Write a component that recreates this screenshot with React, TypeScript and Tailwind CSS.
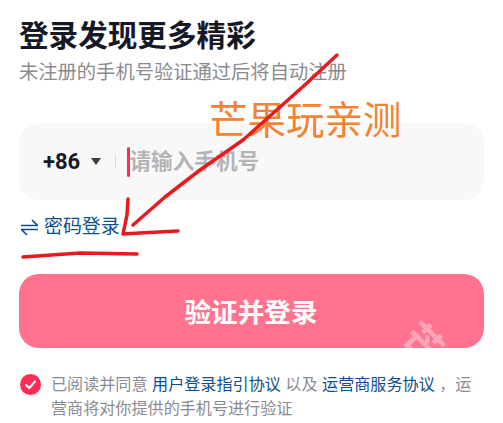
export default function App() {
  return (
    <div className="relative w-[503px] h-[423px] overflow-hidden bg-white px-[19px] pt-[15px] font-['Inter','Noto_Sans_CJK_SC',sans-serif]">
      <h1 className="text-[29.6px] leading-[40px] font-bold text-[#161823]">登录发现更多精彩</h1>
      <p className="mt-[3px] text-[19.3px] leading-[28px] text-[#8a8b91]">未注册的手机号验证通过后将自动注册</p>

      <div className="mt-[37px] flex h-[77px] items-center rounded-[20px] bg-[#f8f8f8] pl-[24px]">
        <span className="w-[37px] font-['Roboto',sans-serif] text-[22px] font-bold text-[#161823]">+86</span>
        <span className="ml-[11px] h-0 w-0 border-x-[5px] border-t-[7px] border-x-transparent border-t-[#3a3a42]" />
        <span className="ml-[14px] h-[15px] w-px bg-[#dddddf]" />
        <span className="ml-[11px] h-[30px] w-[2.5px] rounded-full bg-[#fe2c55]" />
        <span className="text-[21.6px] font-bold text-[#b4b4b6]">请输入手机号</span>
      </div>

      <div className="mt-[15px] flex h-[24px] items-center gap-[6px] pl-[2px] text-[18.9px] text-[#0f4f8d]">
        <svg width="17" height="17" viewBox="0 0 17 17" fill="none" stroke="currentColor" strokeWidth="1.6">
          <path d="M0 6.5H16.5L11 1" />
          <path d="M17 10.5H0.5L6 16" />
        </svg>
        <span>密码登录</span>
      </div>

      <button className="relative mt-[35px] flex h-[74px] w-full items-center justify-center overflow-hidden rounded-[20px] bg-[#ff738f] pt-[3px] text-[26.6px] font-bold text-white">
        <span className="-ml-[1px]">验证并登录</span>
        <span className="absolute left-[385px] top-[50px] rotate-45 text-[38px] leading-none font-bold text-white/40">芒</span>
      </button>

      <div className="mt-[24px] flex items-start gap-[10px] pl-px text-[16.1px] leading-[24px] text-[#8a8b91]">
        <svg className="mt-[2px] shrink-0" width="21" height="21" viewBox="0 0 21 21">
          <circle cx="10.5" cy="10.5" r="10.5" fill="#fe2c55" />
          <path d="M6 11L9.2 14L15 7.5" fill="none" stroke="white" strokeWidth="2.2" strokeLinecap="round" strokeLinejoin="round" />
        </svg>
        <p>
          已阅读并同意 <span className="text-[#0f4f8d]">用户登录指引协议</span> 以及 <span className="text-[#0f4f8d]">运营商服务协议</span> ，运营商将对你提供的手机号进行验证
        </p>
      </div>

      <span className="absolute left-[209px] top-[93px] whitespace-nowrap text-[38.5px] leading-[54px] text-[#f5822f]">芒果玩亲测</span>

      <svg className="absolute left-0 top-0" width="503" height="423" fill="none" stroke="#e8191f" strokeWidth="3.5" strokeLinecap="round" strokeLinejoin="round">
        <path d="M337 55L307 83L243 140L200 170L165 197L133 225" />
        <path d="M128 199L127 215L123 234L140 233L178 231" />
        <path d="M23 257L80 253L137 254" />
      </svg>
    </div>
  );
}
